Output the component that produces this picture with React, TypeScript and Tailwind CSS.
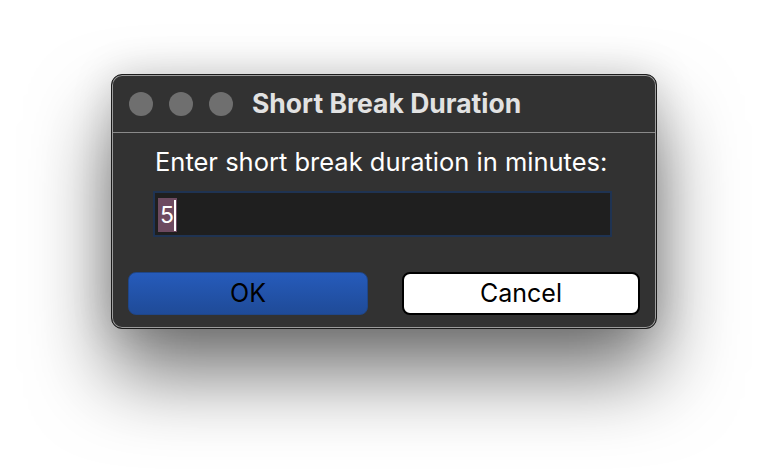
import React from "react";

export default function App() {
  return (
    <div className="w-[768px] h-[476px] bg-white overflow-hidden" style={{ fontFamily: "Inter, 'Open Sans', sans-serif" }}>
      <div className="pt-[74px] pl-[111px]">
        <div className="w-[546px] h-[255px] rounded-[11px] border border-[#1c1c1c] bg-[#323232] shadow-[inset_0_0_0_1px_#9c9c9c,0_45px_80px_rgba(0,0,0,0.55),0_0_40px_rgba(0,0,0,0.15)] flex flex-col">
          <div className="h-[57px] flex items-center pl-[16px] border-b border-[#8a8a8a] mx-[1px] mt-[1px]">
            <div className="flex gap-[16px]">
              <span className="w-[24px] h-[24px] rounded-full bg-[#6f6f6f]" />
              <span className="w-[24px] h-[24px] rounded-full bg-[#6f6f6f]" />
              <span className="w-[24px] h-[24px] rounded-full bg-[#6f6f6f]" />
            </div>
            <div className="ml-[19px] mb-[2px] text-[26.5px] font-bold text-[#e2e2e2] leading-none">Short Break Duration</div>
          </div>
          <div className="flex flex-col px-[41px] pt-[14px]">
            <div className="text-[25.5px] leading-[30px] text-white pl-[2px]">Enter short break duration in minutes:</div>
            <div className="mt-[14px] h-[46px] w-[459px] border-2 border-[#1f3352] bg-[#1f1f1f] flex items-center pl-[3px]">
              <span className="relative bg-[#6d4a60] text-white text-[23px] leading-[34px] pl-[2px] pr-[3px] h-[34px] mt-[2px]">
                5
                <span className="absolute right-[1px] top-[2px] w-[2px] h-[31px] bg-white" />
              </span>
            </div>
          </div>
          <div className="flex justify-between px-[16px] mt-[35px]">
            <div className="w-[240px] h-[43px] rounded-[8px] bg-gradient-to-b from-[#265bbb] to-[#1f4b98] border border-[#1f4688] flex items-center justify-center text-[25px] text-black">OK</div>
            <div className="w-[238px] h-[43px] rounded-[8px] bg-white border-2 border-black flex items-center justify-center text-[25px] text-black">Cancel</div>
          </div>
        </div>
      </div>
    </div>
  );
}
